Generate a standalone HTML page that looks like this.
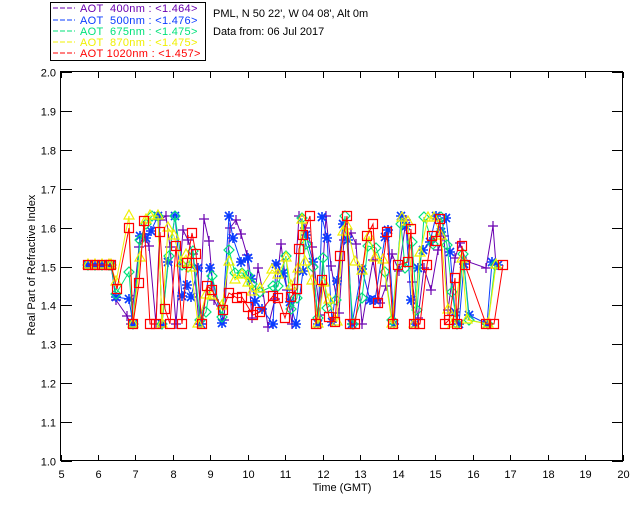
<!DOCTYPE html>
<html><head><meta charset="utf-8"><style>
html,body{margin:0;padding:0;background:#fff;width:640px;height:512px;overflow:hidden}
svg{display:block}
text{font-family:"Liberation Sans",sans-serif;font-size:11px}
</style></head><body>
<svg id="s" width="640" height="512" xmlns="http://www.w3.org/2000/svg">
<rect x="50.5" y="2.5" width="155" height="58" fill="#fff" stroke="#000"/>
<g font-size="11" letter-spacing="0.3">
<line x1="53" y1="8" x2="75" y2="8" stroke="#6a00b0" stroke-dasharray="5,2"/><text x="80" y="12" fill="#6a00b0" xml:space="preserve">AOT  400nm : &lt;1.464&gt;</text>
<line x1="53" y1="20" x2="75" y2="20" stroke="#0a3cff" stroke-dasharray="5,2"/><text x="80" y="24" fill="#0a3cff" xml:space="preserve">AOT  500nm : &lt;1.476&gt;</text>
<line x1="53" y1="31" x2="75" y2="31" stroke="#00e27a" stroke-dasharray="5,2"/><text x="80" y="35" fill="#00e27a" xml:space="preserve">AOT  675nm : &lt;1.475&gt;</text>
<line x1="53" y1="42" x2="75" y2="42" stroke="#f0f000" stroke-dasharray="5,2"/><text x="80" y="46" fill="#f0f000" xml:space="preserve">AOT  870nm : &lt;1.475&gt;</text>
<line x1="53" y1="53" x2="75" y2="53" stroke="#ff0000" stroke-dasharray="5,2"/><text x="80" y="57" fill="#ff0000" xml:space="preserve">AOT 1020nm : &lt;1.457&gt;</text>
</g>
<text x="213" y="17">PML, N 50 22', W 04 08', Alt 0m</text>
<text x="213" y="35">Data from: 06 Jul 2017</text>
<rect x="60.5" y="71.5" width="562" height="389" fill="none" stroke="#000"/>
<g id="ax" stroke="#000"></g>
<g id="lb" text-anchor="end"></g>
<text transform="translate(35,265) rotate(-90)" text-anchor="middle">Real Part of Refractive Index</text>
<text x="342" y="491" text-anchor="middle">Time (GMT)</text>
<g id="dat" fill="none" stroke-width="1"></g>
</svg>
<script>
var NS="http://www.w3.org/2000/svg",s=document.getElementById("s");
function el(p,t,a){var e=document.createElementNS(NS,t);for(var k in a)e.setAttribute(k,a[k]);p.appendChild(e);return e}
var ax=document.getElementById("ax"),lb=document.getElementById("lb");
for(var i=0;i<=10;i++){var y=461-i*38.9;y=Math.round(y)+.5;
 el(ax,"line",{x1:61,y1:y,x2:72,y2:y});el(ax,"line",{x1:612,y1:y,x2:623,y2:y});
 var t=el(lb,"text",{x:56,y:y+4});t.textContent=(1+i/10).toFixed(1);}
for(var h=5;h<=20;h++){var x=Math.round(60.5+(h-5)*37.47)+.5;
 el(ax,"line",{x1:x,y1:461,x2:x,y2:455});el(ax,"line",{x1:x,y1:72,x2:x,y2:78});
 var t=el(s,"text",{x:x,y:478,"text-anchor":"middle"});t.textContent=h;}
var flat=[88,265,95,265,102,265,109,265];
var red=[111,265,117,289,129,228,133,324,139,283,144,221,150,324,156,324,160,232,165,309,170,324,176,246,182,324,187,263,192,233,196,254,202,324,207,286,212,290,223,310,229,293,237,298,242,297,248,307,253,315,260,312,273,296,278,298,285,318,291,297,297,289,299,249,303,235,310,216,316,324,322,280,329,317,335,322,340,256,347,216,350,324,355,324,367,236,373,224,378,303,387,232,393,324,398,265,408,262,411,229,414,324,420,324,427,265,432,236,436,241,440,219,445,324,449,320,455,278,457,324,462,246,465,265,486,324,494,324,503,265];
var blue=[111,265,116,297,129,299,133,324,140,236,146,238,151,231,158,216,162,324,168,262,175,216,182,296,187,285,191,297,198,268,201,324,210,268,222,323,229,216,233,238,241,262,248,258,251,279,255,301,262,309,273,324,276,264,283,273,290,302,296,324,303,271,306,235,313,262,318,324,322,217,327,238,332,322,337,281,343,224,348,240,352,324,362,269,370,300,375,300,385,237,388,230,394,324,401,216,406,226,411,300,415,324,418,268,423,250,430,242,436,216,441,232,446,218,450,252,455,312,459,324,464,264,469,315,487,324,492,262,498,265];
var purp=[111,265,116,300,127,316,131,324,139,247,144,234,149,246,156,324,160,220,166,216,170,247,176,324,183,230,188,240,193,254,199,324,204,219,209,241,214,300,224,320,230,228,236,220,241,234,247,255,252,318,258,268,263,292,268,327,275,299,281,244,287,290,292,324,299,216,305,228,312,247,320,315,326,216,331,266,339,313,344,240,351,233,356,244,362,324,373,260,380,303,386,286,392,254,399,271,406,220,412,282,418,318,424,268,431,290,438,250,444,236,448,310,455,258,460,243,466,261,486,268,493,226,496,265];
var grn=[111,265,116,294,129,272,133,324,140,240,146,224,152,216,158,216,162,324,169,256,175,216,182,265,188,267,193,251,200,320,206,312,212,276,222,317,229,250,235,273,242,273,248,275,252,284,260,292,273,286,278,286,286,256,291,309,297,298,302,218,306,244,313,267,318,318,323,258,327,308,336,300,345,216,353,324,362,298,368,246,376,248,385,272,392,320,401,224,405,268,412,242,417,310,424,217,433,244,441,217,447,245,452,292,457,324,463,254,469,320,488,324,495,265];
var yel=[111,265,116,282,129,216,133,324,140,258,146,220,150,216,158,216,162,324,168,228,174,236,181,263,186,255,191,268,198,324,206,295,212,296,222,306,229,262,235,280,242,275,248,283,252,292,260,289,272,270,278,275,286,258,291,286,298,269,302,220,305,262,312,281,318,324,324,283,329,300,337,322,343,232,347,226,355,262,362,271,369,236,375,258,383,260,392,324,402,218,408,222,414,324,420,253,428,218,434,218,441,236,448,310,453,324,462,259,467,320,488,324,496,265];
var dat=document.getElementById("dat");
function series(p,c,m){p=flat.concat(p);var pts=[];for(var i=0;i<p.length;i+=2)pts.push(p[i]+","+p[i+1]);
 el(dat,"polyline",{points:pts.join(" "),stroke:c,fill:"none"});
 var g=el(dat,"g",{stroke:c,fill:"none"});
 for(var i=0;i<p.length;i+=2){var x=p[i],y=p[i+1],d;
  if(m=="+")d="M"+(x-5)+" "+y+"h10M"+x+" "+(y-5)+"v10";
  else if(m=="*")d="M"+(x-5)+" "+y+"h10M"+x+" "+(y-5)+"v10M"+(x-4)+" "+(y-4)+"l8 8M"+(x-4)+" "+(y+4)+"l8 -8";
  else if(m=="d")d="M"+x+" "+(y-5)+"l5 5l-5 5l-5 -5z";
  else if(m=="t")d="M"+x+" "+(y-6)+"l5 9h-10z";
  else d="M"+(x-4.5)+" "+(y-4.5)+"h9v9h-9z";
  el(g,"path",{d:d,"stroke-width":m=="*"?1.6:1.2});}}
series(purp,"#6a00b0","+");series(blue,"#0a3cff","*");series(grn,"#00e27a","d");series(yel,"#f0f000","t");series(red,"#ff0000","s");
</script>
</body></html>
